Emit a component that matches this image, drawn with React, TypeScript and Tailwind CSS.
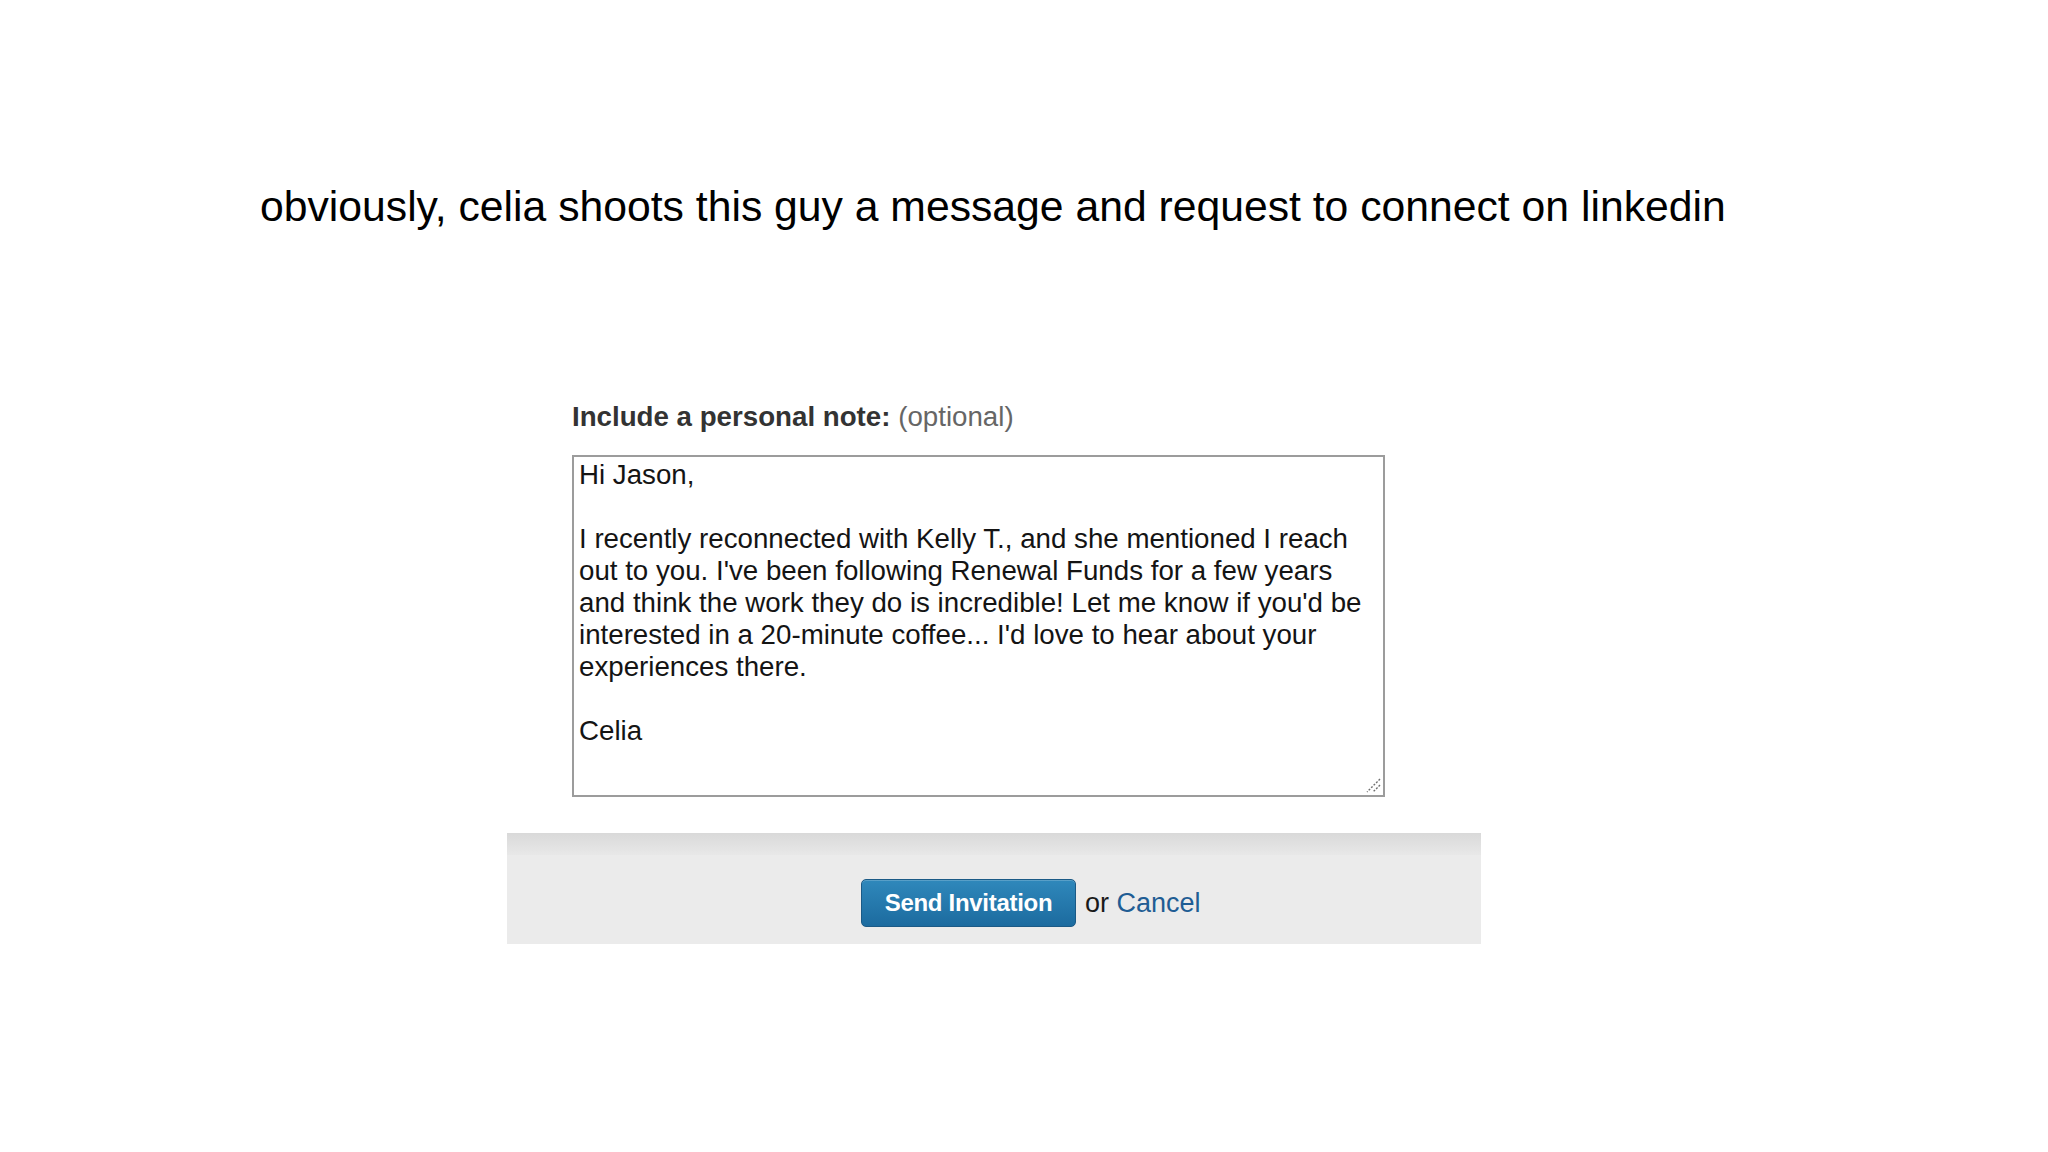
export default function App() {
  const lines = [
    'Hi Jason,',
    '',
    'I recently reconnected with Kelly T., and she mentioned I reach',
    "out to you. I've been following Renewal Funds for a few years",
    "and think the work they do is incredible! Let me know if you'd be",
    "interested in a 20-minute coffee... I'd love to hear about your",
    'experiences there.',
    '',
    'Celia',
  ]

  return (
    <div className="min-h-screen bg-white font-['Liberation_Sans',Arial,sans-serif]">
      <h1 className="pl-[260px] pt-[182px] text-[42.7px] leading-[48px] font-normal text-black">
        obviously, celia shoots this guy a message and request to connect on linkedin
      </h1>

      <div className="ml-[507px] mt-[172px] w-[974px]">
        <div className="pl-[65px]">
          <div className="text-[27.7px] leading-[30px] text-[#333]">
            <span className="font-bold">Include a personal note:</span>{' '}
            <span className="text-[#666]">(optional)</span>
          </div>

          <div className="relative mt-[23px] h-[342px] w-[813px] border-2 border-[#9c9c9c] bg-white px-[5px] pt-[2px] text-[27.7px] leading-[32px] text-[#141414]">
            {lines.map((line, i) => (
              <div key={i} className="h-[32px] whitespace-pre">
                {line}
              </div>
            ))}
            <svg className="absolute bottom-[2px] right-[2px]" width="18" height="18" viewBox="0 0 18 18">
              <path d="M17 4 L4 17" stroke="#6f6f6f" strokeWidth="1.4" strokeDasharray="2 1.5" />
              <path d="M17 10 L10 17" stroke="#6f6f6f" strokeWidth="1.4" strokeDasharray="2 1.5" />
            </svg>
          </div>
        </div>

        <div className="mt-[36px] h-[111px] bg-[#ebebeb]">
          <div className="h-[22px] bg-gradient-to-b from-[#d9d9d9] to-[#e8e8e8]" />
          <div className="flex items-center gap-[9px] pl-[354px] pt-[24px]">
            <button className="h-[48px] w-[215px] rounded-[5px] border border-[#1b5a86] bg-gradient-to-b from-[#2f88bb] to-[#1c6b9f] text-[24px] font-bold tracking-[-0.3px] text-white shadow-[inset_0_1px_0_rgba(255,255,255,0.2)]">
              Send Invitation
            </button>
            <span className="text-[27px] text-[#1a1a1a]">
              or <a className="text-[#1f5d94]">Cancel</a>
            </span>
          </div>
        </div>
      </div>
    </div>
  )
}
